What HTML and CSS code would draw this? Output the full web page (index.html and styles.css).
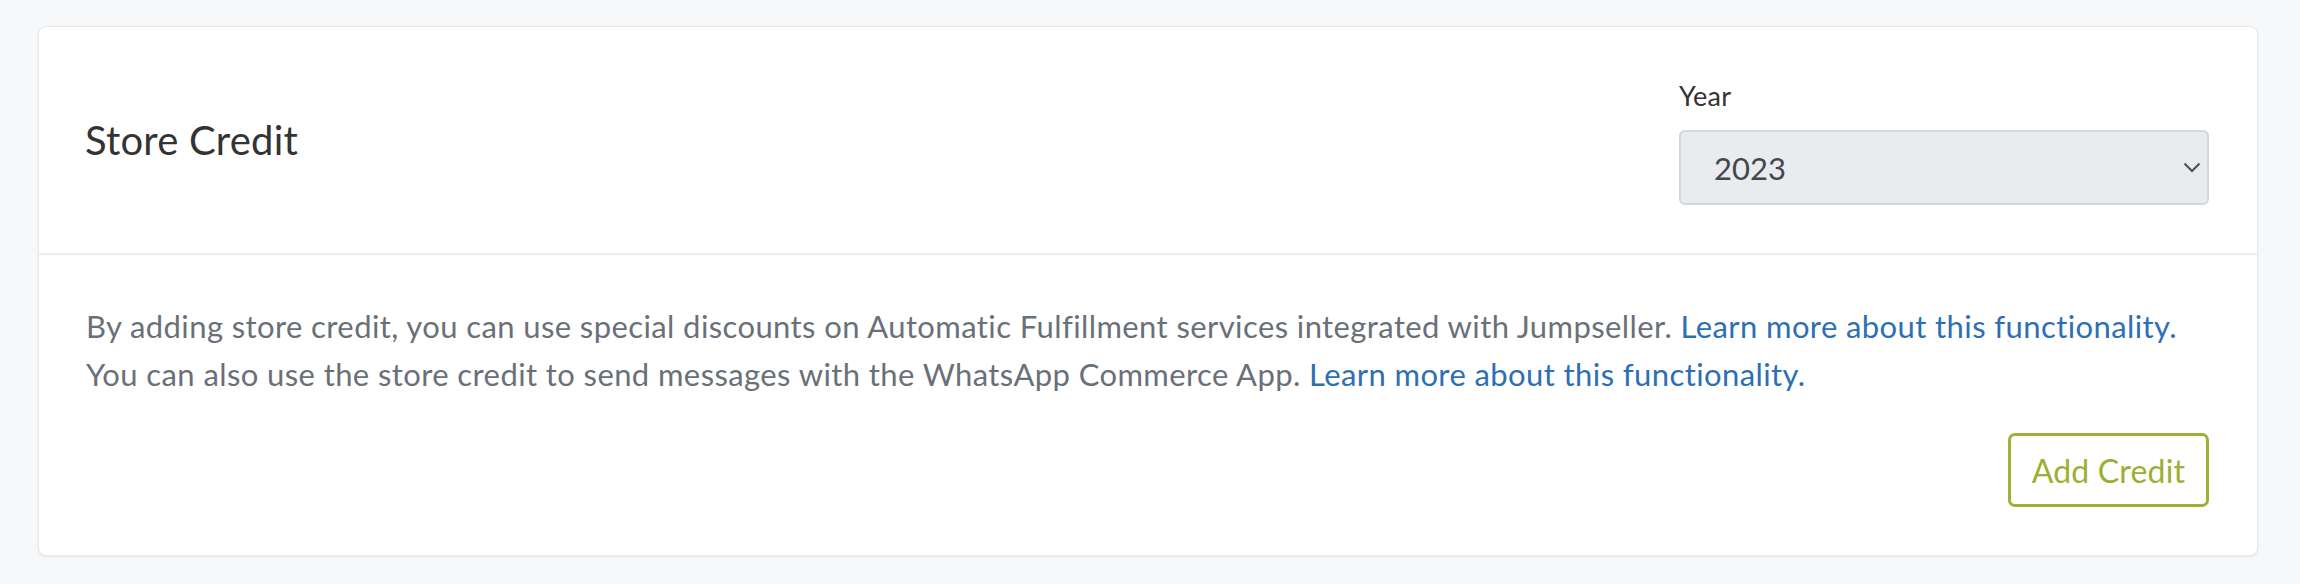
FILE: index.html
```html
<!DOCTYPE html>
<html lang="en">
<head>
<meta charset="utf-8">
<title>Store Credit</title>
<link rel="stylesheet" href="styles.css">
</head>
<body>
<section class="card">
  <header class="card-header">
    <h2 class="card-title">Store Credit</h2>
    <div class="year-field">
      <label class="year-label" for="year">Year</label>
      <div class="select-wrap">
        <select id="year" class="year-select">
          <option>2023</option>
          <option>2022</option>
        </select>
        <svg class="chevron" width="18" height="11" viewBox="0 0 18 11" aria-hidden="true"><path d="M1.5 1.5 L9 9 L16.5 1.5" fill="none" stroke="#4a4f55" stroke-width="2"/></svg>
      </div>
    </div>
  </header>
  <div class="card-body">
    <p class="desc">By adding store credit, you can use special discounts on Automatic Fulfillment services integrated with Jumpseller. <a href="#">Learn more about this functionality.</a><br>You can also use the store credit to send messages with the WhatsApp Commerce App. <a href="#">Learn more about this functionality.</a></p>
    <div class="actions">
      <button class="btn-outline" type="button">Add Credit</button>
    </div>
  </div>
</section>
</body>
</html>
```

FILE: styles.css
```css
html, body {
  margin: 0;
  background: #f7f8fa;
}
body {
  padding: 26px 42px 28px 38px;
  font-family: Lato, "Liberation Sans", Arial, sans-serif;
}
.card {
  background: #fff;
  border: 1px solid #e7e8eb;
  border-radius: 8px;
  box-shadow: 0 1px 3px rgba(0,0,0,0.07);
}
.card-header {
  display: flex;
  align-items: center;
  justify-content: space-between;
  padding: 48px 48px 48px 46px;
  border-bottom: 2px solid #ecedf0;
}
.card-title {
  margin: 0;
  font-size: 40px;
  font-weight: 400;
  letter-spacing: 0.2px;
  color: #333;
}
.year-field {
  display: flex;
  flex-direction: column;
  width: 530px;
}
.year-label {
  font-size: 27px;
  line-height: 42px;
  letter-spacing: 0.2px;
  color: #333;
  margin-bottom: 13px;
}
.select-wrap {
  position: relative;
}
.year-select {
  appearance: none;
  -webkit-appearance: none;
  width: 100%;
  height: 75px;
  box-sizing: border-box;
  padding: 0 33px;
  font-family: inherit;
  font-size: 31px;
  color: #43474d;
  background: #e9ebee;
  border: 2px solid #d3d6da;
  border-radius: 6px;
  outline: none;
}
.chevron {
  position: absolute;
  right: 8px;
  top: 32px;
}
.card-body {
  padding: 47px 48px 48px 47px;
}
.desc {
  margin: 0;
  font-size: 31px;
  line-height: 48px;
  letter-spacing: 0.4px;
  color: #6a7079;
}
.desc a {
  color: #2d6fb4;
  text-decoration: none;
}
.actions {
  display: flex;
  justify-content: flex-end;
  margin-top: 35px;
}
.btn-outline {
  height: 74px;
  width: 201px;
  padding: 0;
  font-family: inherit;
  font-size: 32px;
  letter-spacing: 0.2px;
  color: #9bb032;
  background: #fff;
  border: 3px solid #9eb036;
  border-radius: 7px;
  cursor: pointer;
}
```
